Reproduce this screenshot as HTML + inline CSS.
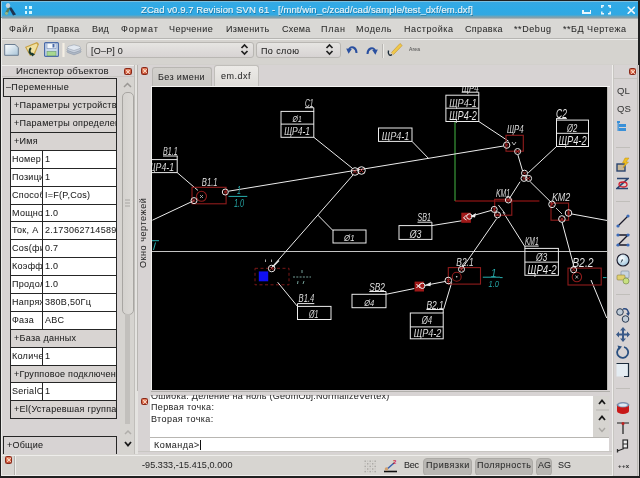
<!DOCTYPE html>
<html><head><meta charset="utf-8">
<style>
*{margin:0;padding:0;box-sizing:border-box}
html,body{width:640px;height:478px;overflow:hidden;-webkit-font-smoothing:antialiased;background:#d8d6d2;font-family:"Liberation Sans",sans-serif;font-size:10px;color:#202020;position:relative}
.a{position:absolute}
.t{position:absolute;white-space:pre;line-height:1;will-change:transform;-webkit-text-stroke:0.05px currentColor;font-family:"Liberation Sans",sans-serif}
</style></head><body>
<div class="a" style="left:0px;top:0px;width:640px;height:478px;background:#d8d6d2;"></div>
<div class="a" style="left:0;top:0;width:640px;height:19px;background:linear-gradient(#58a8cc 0,#58a8cc 2px,#35a9e4 2.5px,#2eaae6 9px,#32a8e2 15px,#5aa6c6 15.8px,#7aa2b2 17px,#8e9ea6 18.2px,#dcdbd8 19px)"></div>
<div class="a" style="left:0px;top:0px;width:640px;height:1px;background:#202020;"></div>
<div class="a" style="left:0px;top:0px;width:1px;height:478px;background:#202020;"></div>
<div class="a" style="left:638px;top:0px;width:2px;height:478px;background:#202020;"></div>
<div class="a" style="left:0px;top:476px;width:640px;height:2px;background:#202020;"></div>
<svg class="a" style="left:3px;top:2px" width="14" height="14" viewBox="0 0 14 14"><path d="M5.5 5.5 L8.5 5.5 L13 12.5 L10 13.5 Z" fill="#1e3450"/><path d="M5 5.5 L1.5 12 L4 13 L7 7 Z" fill="#5a7a5a"/><ellipse cx="3.5" cy="11.5" rx="1.6" ry="1.4" fill="#90b890"/><ellipse cx="5" cy="3.5" rx="2.2" ry="2.5" fill="#c4d4dc"/></svg>
<div class="a" style="left:1px;top:1px;width:1px;height:16px;background:#8ccbe8;"></div>
<div class="a" style="left:1px;top:1px;width:637px;height:1px;background:#7cc0e0;"></div>
<div class="a" style="left:24.6px;top:5.5px;width:2.8px;height:3.5px;background:#d4f6fc;"></div>
<div class="a" style="left:29.3px;top:5.5px;width:2.8px;height:3.5px;background:#d4f6fc;"></div>
<div class="a" style="left:24.6px;top:11px;width:2.8px;height:3px;background:#d4f6fc;"></div>
<div class="a" style="left:29.3px;top:11px;width:2.8px;height:3px;background:#d4f6fc;"></div>
<div class="t" style="left:141.00px;top:5.16px;font-size:9.5px;color:#e8f4f8;font-weight:normal;letter-spacing:0.078px;-webkit-text-stroke:0.15px #e8f4f8;text-shadow:0.6px 0.6px 0.4px rgba(0,50,80,0.45)">ZCad v0.9.7 Revision SVN 61 - [/mnt/win_c/zcad/cad/sample/test_dxf/em.dxf]</div>
<div class="a" style="left:582px;top:12.3px;width:9px;height:1.7px;background:#e8f6fc"></div>
<div class="a" style="left:582px;top:9.5px;width:1.5px;height:3px;background:#e8f6fc"></div><div class="a" style="left:589.5px;top:9.5px;width:1.5px;height:3px;background:#e8f6fc"></div>
<svg class="a" style="left:601px;top:5px" width="10" height="9.5" viewBox="0 0 10 9.5" fill="none" stroke="#e8f6fc" stroke-width="1.5"><path d="M0.8 3V0.8H3M7 0.8H9.2V3M9.2 6.5V8.7H7M3 8.7H0.8V6.5"/></svg>
<svg class="a" style="left:626.5px;top:5.5px" width="8.5" height="8.5" viewBox="0 0 8.5 8.5" stroke="#f0f8fc" stroke-width="1.6"><path d="M0.7 0.7L7.8 7.8M7.8 0.7L0.7 7.8"/></svg>
<div class="a" style="left:1px;top:19px;width:637px;height:19px;background:#d9d8d5;"></div>
<div class="a" style="left:1px;top:38px;width:637px;height:1px;background:#b6b5b2;"></div>
<div class="a" style="left:1px;top:39px;width:637px;height:1px;background:#ededeb;"></div>
<div class="t" style="left:9.40px;top:25.18px;font-size:9px;color:#2a2a2a;font-weight:normal;letter-spacing:0.753px;">Файл</div>
<div class="t" style="left:46.50px;top:25.18px;font-size:9px;color:#2a2a2a;font-weight:normal;letter-spacing:0.379px;">Правка</div>
<div class="t" style="left:92.00px;top:25.18px;font-size:9px;color:#2a2a2a;font-weight:normal;letter-spacing:0.252px;">Вид</div>
<div class="t" style="left:121.00px;top:25.18px;font-size:9px;color:#2a2a2a;font-weight:normal;letter-spacing:1.003px;">Формат</div>
<div class="t" style="left:169.00px;top:25.18px;font-size:9px;color:#2a2a2a;font-weight:normal;letter-spacing:0.455px;">Черчение</div>
<div class="t" style="left:225.50px;top:25.18px;font-size:9px;color:#2a2a2a;font-weight:normal;letter-spacing:0.356px;">Изменить</div>
<div class="t" style="left:281.70px;top:25.18px;font-size:9px;color:#2a2a2a;font-weight:normal;letter-spacing:0.298px;">Схема</div>
<div class="t" style="left:321.00px;top:25.18px;font-size:9px;color:#2a2a2a;font-weight:normal;letter-spacing:0.766px;">План</div>
<div class="t" style="left:356.00px;top:25.18px;font-size:9px;color:#2a2a2a;font-weight:normal;letter-spacing:0.637px;">Модель</div>
<div class="t" style="left:404.00px;top:25.18px;font-size:9px;color:#2a2a2a;font-weight:normal;letter-spacing:0.586px;">Настройка</div>
<div class="t" style="left:464.60px;top:25.18px;font-size:9px;color:#2a2a2a;font-weight:normal;letter-spacing:0.348px;">Справка</div>
<div class="t" style="left:514.00px;top:25.18px;font-size:9px;color:#2a2a2a;font-weight:normal;letter-spacing:0.578px;">**Debug</div>
<div class="t" style="left:562.60px;top:25.18px;font-size:9px;color:#2a2a2a;font-weight:normal;letter-spacing:0.520px;">**БД Чертежа</div>
<div class="a" style="left:1px;top:40px;width:637px;height:25px;background:#d5d3cf;"></div>
<div class="a" style="left:1px;top:64px;width:637px;height:1px;background:#d2d0cc;"></div>
<svg class="a" style="left:4px;top:43px" width="15" height="13" viewBox="0 0 15 13"><defs><linearGradient id="g1" x1="0" y1="0" x2="1" y2="1"><stop offset="0" stop-color="#ffffff"/><stop offset="1" stop-color="#a8c4d8"/></linearGradient></defs><path d="M0.7 1.5H11L14.3 4.5V12.3H0.7Z" fill="url(#g1)" stroke="#6a7c90" stroke-width="1"/></svg>
<svg class="a" style="left:23.5px;top:41px" width="16" height="16" viewBox="0 0 16 16"><path d="M1 6L13 1L15 3L11 13L6 15Z" fill="#c8a040"/><path d="M2.5 6.5L12.5 2.5L13.5 4L10 12L6 13.5Z" fill="#f0e0a0"/><path d="M7 7C4.5 9 5 13 9 13.5" stroke="#1a3a30" stroke-width="2.2" fill="none"/><path d="M8 11.5L11 13.5L8 15.5Z" fill="#1a3a30"/></svg>
<svg class="a" style="left:43.5px;top:41.5px" width="15" height="15" viewBox="0 0 15 15"><rect x="0.6" y="0.6" width="13.8" height="13.8" rx="1" fill="#c8d8ec" stroke="#4a6aa8" stroke-width="1.2"/><rect x="3" y="1.2" width="9" height="5.5" fill="#f4f8fc" stroke="#7a90b8" stroke-width="0.6"/><rect x="8.5" y="2" width="2" height="3.5" fill="#4a6aa8"/><rect x="3" y="9.5" width="9" height="4.3" fill="#a8d890" stroke="#6a9a70" stroke-width="0.6"/></svg>
<div class="a" style="left:61.5px;top:43px;width:3px;height:14px;background:linear-gradient(90deg,#e4dcd8,#f4f0e4,#e0dcd8);"></div>
<svg class="a" style="left:66px;top:43.5px" width="16" height="12" viewBox="0 0 16 12"><path d="M1 7.5Q1 6.5 3 6L8 4.5L13 6Q15 6.5 15 7.5Q15 8.5 13 9L8 10.8L3 9Q1 8.5 1 7.5Z" fill="#b0bac8" stroke="#8a94a4" stroke-width="0.6"/><path d="M1 5.5Q1 4.5 3 4L8 2.5L13 4Q15 4.5 15 5.5Q15 6.5 13 7L8 8.8L3 7Q1 6.5 1 5.5Z" fill="#c8d0dc" stroke="#8a94a4" stroke-width="0.6"/><path d="M1.5 3.5Q1.5 2.5 3.5 2L8 0.8L12.5 2Q14.5 2.5 14.5 3.5Q14.5 4.5 12.5 5L8 6.5L3.5 5Q1.5 4.5 1.5 3.5Z" fill="#e2e8f0" stroke="#98a2b0" stroke-width="0.6"/></svg>
<div class="a" style="left:85.5px;top:41.5px;width:168px;height:16px;border:1px solid #b9b7b3;border-radius:3px;background:linear-gradient(#e6e5e2,#d7d3d3)"></div>
<div class="t" style="left:90.80px;top:46.88px;font-size:9px;color:#222;font-weight:normal;letter-spacing:0.214px;">[O–P] 0</div>
<svg class="a" style="left:240px;top:43px" width="9" height="13" viewBox="0 0 9 13" fill="none" stroke="#202020" stroke-width="1.7"><path d="M1.5 5L4.5 2L7.5 5M1.5 8L4.5 11L7.5 8"/></svg>
<div class="a" style="left:255.5px;top:41.5px;width:85px;height:16px;border:1px solid #b9b7b3;border-radius:3px;background:linear-gradient(#e6e5e2,#d7d3d3)"></div>
<div class="t" style="left:261.00px;top:46.88px;font-size:9px;color:#222;font-weight:normal;letter-spacing:0.401px;">По слою</div>
<svg class="a" style="left:325px;top:43px" width="9" height="13" viewBox="0 0 9 13" fill="none" stroke="#202020" stroke-width="1.7"><path d="M1.5 5L4.5 2L7.5 5M1.5 8L4.5 11L7.5 8"/></svg>
<svg class="a" style="left:346px;top:44px" width="12" height="11" viewBox="0 0 12 11" fill="none"><path d="M10.5 9C10.5 3.5 5 1 3 5.5" stroke="#2a50a0" stroke-width="2"/><path d="M0.2 4.5L5.8 5L2.6 9.8Z" fill="#2a50a0"/></svg>
<svg class="a" style="left:366px;top:44.5px" width="12" height="11" viewBox="0 0 12 11" fill="none"><g transform="translate(12,0) scale(-1,1)"><path d="M10.5 9C10.5 3.5 5 1 3 5.5" stroke="#2a50a0" stroke-width="2"/><path d="M0.2 4.5L5.8 5L2.6 9.8Z" fill="#2a50a0"/></g></svg>
<div class="a" style="left:382px;top:44px;width:1px;height:14px;background:#b8b6b2;"></div>
<div class="a" style="left:383px;top:44px;width:1px;height:14px;background:#ecebe8;"></div>
<svg class="a" style="left:387px;top:42px" width="16" height="15" viewBox="0 0 16 15"><path d="M4.5 10.5L13 1.5L15.2 3.5L6.5 12.5Z" fill="#f0c848" stroke="#c09030" stroke-width="0.6"/><path d="M4.5 10.5L6.5 12.5L4 13Z" fill="#e8d0a0"/><path d="M1.5 8.5C0.5 13 3 14 5 12.5" stroke="#1a2a38" stroke-width="1.4" fill="none"/></svg>
<div class="t" style="left:409.00px;top:47.27px;font-size:5px;color:#555;font-weight:normal;letter-spacing:0.146px;">Area</div>
<div class="a" style="left:1px;top:65px;width:133px;height:389px;background:#d7d3d3;"></div>
<div class="a" style="left:1px;top:65px;width:133px;height:1px;background:#eeedeb;"></div>
<div class="t" style="left:15.50px;top:66.47px;font-size:9.6px;color:#2a2a2a;font-weight:normal;letter-spacing:0.128px;">Инспектор объектов</div>
<div class="a" style="left:124px;top:67.5px;width:7.5px;height:7.5px;border-radius:1.5px;background:radial-gradient(circle at 50% 40%,#f4b89a,#d86848 60%,#a03020);border:1px solid #8a2818"></div>
<svg class="a" style="left:124px;top:67.5px" width="8" height="8" viewBox="0 0 8 8" stroke="#fbe0d0" stroke-width="1" opacity="0.8"><path d="M2 2L6 6M6 2L2 6"/></svg>
<div class="a" style="left:1px;top:76px;width:133px;height:1px;background:#c8c6c2;"></div>
<div class="a" style="left:3px;top:78px;width:114px;height:342px;overflow:hidden">
<div class="a" style="left:0;top:0.0px;width:114px;height:19px;background:#d9d5d3;border:1px solid #262626"></div>
<div class="t" style="left:2.60px;top:4.68px;font-size:9px;color:#222;font-weight:normal;letter-spacing:0.359px;">–Переменные</div>
<div class="a" style="left:7px;top:18.0px;width:107px;height:19px;background:#d8d4d2;border:1px solid #262626"></div>
<div class="t" style="left:10.50px;top:22.68px;font-size:9px;color:#222;font-weight:normal;letter-spacing:0.280px;">+Параметры устройства</div>
<div class="a" style="left:7px;top:36.0px;width:107px;height:19px;background:#d8d4d2;border:1px solid #262626"></div>
<div class="t" style="left:10.50px;top:40.68px;font-size:9px;color:#222;font-weight:normal;letter-spacing:0.280px;">+Параметры определения</div>
<div class="a" style="left:7px;top:54.0px;width:107px;height:19px;background:#d8d4d2;border:1px solid #262626"></div>
<div class="t" style="left:10.50px;top:58.68px;font-size:9px;color:#222;font-weight:normal;letter-spacing:0.280px;">+Имя</div>
<div class="a" style="left:7px;top:72.0px;width:107px;height:19px;background:#fff;border:1px solid #262626"></div>
<div class="a" style="left:39px;top:72.0px;width:1px;height:19px;background:#262626"></div>
<div class="a" style="left:8.7px;top:73.0px;width:30.8px;height:17px;overflow:hidden">
<div class="t" style="left:0.60px;top:3.68px;font-size:9px;color:#222;font-weight:normal;letter-spacing:0.280px;">Номер</div>
</div>
<div class="t" style="left:42.30px;top:76.68px;font-size:9px;color:#222;font-weight:normal;letter-spacing:0.280px;">1</div>
<div class="a" style="left:7px;top:90.0px;width:107px;height:19px;background:#fff;border:1px solid #262626"></div>
<div class="a" style="left:39px;top:90.0px;width:1px;height:19px;background:#262626"></div>
<div class="a" style="left:8.7px;top:91.0px;width:30.8px;height:17px;overflow:hidden">
<div class="t" style="left:0.60px;top:3.68px;font-size:9px;color:#222;font-weight:normal;letter-spacing:0.280px;">Позиция</div>
</div>
<div class="t" style="left:42.30px;top:94.68px;font-size:9px;color:#222;font-weight:normal;letter-spacing:0.280px;">1</div>
<div class="a" style="left:7px;top:108.0px;width:107px;height:19px;background:#fff;border:1px solid #262626"></div>
<div class="a" style="left:39px;top:108.0px;width:1px;height:19px;background:#262626"></div>
<div class="a" style="left:8.7px;top:109.0px;width:30.8px;height:17px;overflow:hidden">
<div class="t" style="left:0.60px;top:3.68px;font-size:9px;color:#222;font-weight:normal;letter-spacing:0.280px;">Способ</div>
</div>
<div class="t" style="left:42.30px;top:112.68px;font-size:9px;color:#222;font-weight:normal;letter-spacing:0.280px;">I=F(P,Cos)</div>
<div class="a" style="left:7px;top:126.0px;width:107px;height:18px;background:#fff;border:1px solid #262626"></div>
<div class="a" style="left:39px;top:126.0px;width:1px;height:18px;background:#262626"></div>
<div class="a" style="left:8.7px;top:127.0px;width:30.8px;height:16px;overflow:hidden">
<div class="t" style="left:0.60px;top:3.68px;font-size:9px;color:#222;font-weight:normal;letter-spacing:0.280px;">Мощность</div>
</div>
<div class="t" style="left:42.30px;top:130.68px;font-size:9px;color:#222;font-weight:normal;letter-spacing:0.280px;">1.0</div>
<div class="a" style="left:7px;top:143.0px;width:107px;height:19px;background:#fff;border:1px solid #262626"></div>
<div class="a" style="left:39px;top:143.0px;width:1px;height:19px;background:#262626"></div>
<div class="a" style="left:8.7px;top:144.0px;width:30.8px;height:17px;overflow:hidden">
<div class="t" style="left:0.60px;top:3.68px;font-size:9px;color:#222;font-weight:normal;letter-spacing:0.280px;">Ток, А</div>
</div>
<div class="t" style="left:42.30px;top:147.68px;font-size:9px;color:#222;font-weight:normal;letter-spacing:0.280px;">2.17306271458951</div>
<div class="a" style="left:7px;top:161.0px;width:107px;height:19px;background:#fff;border:1px solid #262626"></div>
<div class="a" style="left:39px;top:161.0px;width:1px;height:19px;background:#262626"></div>
<div class="a" style="left:8.7px;top:162.0px;width:30.8px;height:17px;overflow:hidden">
<div class="t" style="left:0.60px;top:3.68px;font-size:9px;color:#222;font-weight:normal;letter-spacing:0.280px;">Cos(фи)</div>
</div>
<div class="t" style="left:42.30px;top:165.68px;font-size:9px;color:#222;font-weight:normal;letter-spacing:0.280px;">0.7</div>
<div class="a" style="left:7px;top:179.0px;width:107px;height:19px;background:#fff;border:1px solid #262626"></div>
<div class="a" style="left:39px;top:179.0px;width:1px;height:19px;background:#262626"></div>
<div class="a" style="left:8.7px;top:180.0px;width:30.8px;height:17px;overflow:hidden">
<div class="t" style="left:0.60px;top:3.68px;font-size:9px;color:#222;font-weight:normal;letter-spacing:0.280px;">Коэффициент</div>
</div>
<div class="t" style="left:42.30px;top:183.68px;font-size:9px;color:#222;font-weight:normal;letter-spacing:0.280px;">1.0</div>
<div class="a" style="left:7px;top:197.0px;width:107px;height:19px;background:#fff;border:1px solid #262626"></div>
<div class="a" style="left:39px;top:197.0px;width:1px;height:19px;background:#262626"></div>
<div class="a" style="left:8.7px;top:198.0px;width:30.8px;height:17px;overflow:hidden">
<div class="t" style="left:0.60px;top:3.68px;font-size:9px;color:#222;font-weight:normal;letter-spacing:0.280px;">Продолж</div>
</div>
<div class="t" style="left:42.30px;top:201.68px;font-size:9px;color:#222;font-weight:normal;letter-spacing:0.280px;">1.0</div>
<div class="a" style="left:7px;top:215.0px;width:107px;height:19px;background:#fff;border:1px solid #262626"></div>
<div class="a" style="left:39px;top:215.0px;width:1px;height:19px;background:#262626"></div>
<div class="a" style="left:8.7px;top:216.0px;width:30.8px;height:17px;overflow:hidden">
<div class="t" style="left:0.60px;top:3.68px;font-size:9px;color:#222;font-weight:normal;letter-spacing:0.280px;">Напряжение</div>
</div>
<div class="t" style="left:42.30px;top:219.68px;font-size:9px;color:#222;font-weight:normal;letter-spacing:0.280px;">380В,50Гц</div>
<div class="a" style="left:7px;top:233.0px;width:107px;height:19px;background:#fff;border:1px solid #262626"></div>
<div class="a" style="left:39px;top:233.0px;width:1px;height:19px;background:#262626"></div>
<div class="a" style="left:8.7px;top:234.0px;width:30.8px;height:17px;overflow:hidden">
<div class="t" style="left:0.60px;top:3.68px;font-size:9px;color:#222;font-weight:normal;letter-spacing:0.280px;">Фаза</div>
</div>
<div class="t" style="left:42.30px;top:237.68px;font-size:9px;color:#222;font-weight:normal;letter-spacing:0.280px;">ABC</div>
<div class="a" style="left:7px;top:251.0px;width:107px;height:19px;background:#d8d4d2;border:1px solid #262626"></div>
<div class="t" style="left:10.50px;top:255.68px;font-size:9px;color:#222;font-weight:normal;letter-spacing:0.280px;">+База данных</div>
<div class="a" style="left:7px;top:269.0px;width:107px;height:19px;background:#fff;border:1px solid #262626"></div>
<div class="a" style="left:39px;top:269.0px;width:1px;height:19px;background:#262626"></div>
<div class="a" style="left:8.7px;top:270.0px;width:30.8px;height:17px;overflow:hidden">
<div class="t" style="left:0.60px;top:3.68px;font-size:9px;color:#222;font-weight:normal;letter-spacing:0.280px;">Количество</div>
</div>
<div class="t" style="left:42.30px;top:273.68px;font-size:9px;color:#222;font-weight:normal;letter-spacing:0.280px;">1</div>
<div class="a" style="left:7px;top:287.0px;width:107px;height:18px;background:#d8d4d2;border:1px solid #262626"></div>
<div class="t" style="left:10.50px;top:291.68px;font-size:9px;color:#222;font-weight:normal;letter-spacing:0.280px;">+Групповое подключение</div>
<div class="a" style="left:7px;top:304.0px;width:107px;height:19px;background:#fff;border:1px solid #262626"></div>
<div class="a" style="left:39px;top:304.0px;width:1px;height:19px;background:#262626"></div>
<div class="a" style="left:8.7px;top:305.0px;width:30.8px;height:17px;overflow:hidden">
<div class="t" style="left:0.60px;top:3.68px;font-size:9px;color:#222;font-weight:normal;letter-spacing:0.280px;">SerialConnection</div>
</div>
<div class="t" style="left:42.30px;top:308.68px;font-size:9px;color:#222;font-weight:normal;letter-spacing:0.280px;">1</div>
<div class="a" style="left:7px;top:322.0px;width:107px;height:19px;background:#d8d4d2;border:1px solid #262626"></div>
<div class="t" style="left:10.50px;top:326.68px;font-size:9px;color:#222;font-weight:normal;letter-spacing:0.280px;">+El(Устаревшая группа)</div>
</div>
<div class="a" style="left:120px;top:78px;width:14px;height:376px;background:#d6d4d0;"></div>
<svg class="a" style="left:123px;top:82px" width="9" height="6" viewBox="0 0 9 6" fill="none" stroke="#9a9894" stroke-width="1.5"><path d="M1 5L4.5 1.5L8 5"/></svg>
<div class="a" style="left:122px;top:91.5px;width:12px;height:223px;border:1px solid #a8a6a2;border-radius:5px;background:linear-gradient(90deg,#d4d2ce,#dcdad6)"></div>
<div class="a" style="left:124.5px;top:314px;width:5px;height:110px;background:#c2c0bc;"></div>
<svg class="a" style="left:124px;top:199px" width="7" height="8" viewBox="0 0 7 8" stroke="#a8a6a2" stroke-width="1"><path d="M1 1H6M1 4H6M1 7H6"/></svg>
<svg class="a" style="left:123.5px;top:429px" width="8" height="6" viewBox="0 0 8 6" fill="none" stroke="#b0aeaa" stroke-width="1.5"><path d="M1 5L4 2L7 5"/></svg>
<svg class="a" style="left:123.5px;top:441px" width="8" height="6" viewBox="0 0 8 6" fill="none" stroke="#1a1a1a" stroke-width="1.8"><path d="M1 1L4 4.5L7 1"/></svg>
<div class="a" style="left:3px;top:436px;width:114px;height:19px;background:#d7d3d3;border:1px solid #262626;border-bottom:none"></div>
<div class="t" style="left:6.60px;top:441.08px;font-size:9px;color:#222;font-weight:normal;letter-spacing:0.228px;">+Общие</div>
<div class="a" style="left:133.5px;top:65px;width:1px;height:390px;background:#c0beba;"></div>
<div class="a" style="left:134.5px;top:65px;width:3px;height:390px;background:#e4e3e0;"></div>
<div class="a" style="left:137.3px;top:65px;width:1px;height:326px;background:#b8b6b2;"></div>
<div class="a" style="left:138px;top:65px;width:474px;height:326px;background:#d7d3d3;"></div>
<div class="a" style="left:140.8px;top:67px;width:7.5px;height:7.5px;border-radius:1.5px;background:radial-gradient(circle at 50% 40%,#f4b89a,#d86848 60%,#a03020);border:1px solid #8a2818"></div>
<svg class="a" style="left:140.8px;top:67px" width="8" height="8" viewBox="0 0 8 8" stroke="#fbe0d0" stroke-width="1" opacity="0.8"><path d="M2 2L6 6M6 2L2 6"/></svg>
<div class="a" style="left:152.3px;top:67px;width:60px;height:20px;background:linear-gradient(#d2d0cc,#c8c6c2);border:1px solid #b8b6b2;border-bottom:none;border-radius:3px 3px 0 0"></div>
<div class="t" style="left:158.40px;top:72.58px;font-size:9px;color:#2a2a2a;font-weight:normal;letter-spacing:0.380px;">Без имени</div>
<div class="a" style="left:214px;top:65px;width:44.5px;height:22px;background:linear-gradient(#eceae7,#dedcd8);border:1px solid #c0beba;border-bottom:none;border-radius:3px 3px 0 0"></div>
<div class="t" style="left:221.40px;top:71.58px;font-size:9px;color:#2a2a2a;font-weight:normal;letter-spacing:0.477px;">em.dxf</div>
<div class="a" style="left:150.5px;top:86px;width:459px;height:1px;background:#f4f3f1;"></div>
<div class="a" style="left:150.5px;top:86px;width:1.3px;height:305px;background:#f0efed;"></div>
<div class="a" style="left:607px;top:87px;width:1px;height:304px;background:#bcbab6;"></div>
<div class="t" style="left:139.4px;top:267.8px;transform:rotate(-90deg);transform-origin:0 0;font-size:9px;color:#2a2a2a;letter-spacing:0.57px">Окно чертежей</div>
<div class="a" style="left:152px;top:87px;width:455px;height:303px;background:#000;"></div>
<svg class="a" style="left:152px;top:87px;will-change:transform" width="455" height="303" viewBox="152 87 455 303"><path d="M152,251.5 L607,251.5" stroke="#c4c4c4" stroke-width="1.1" fill="none" /><path d="M455,121.5 L455,201" stroke="#3a9a3a" stroke-width="1.2" fill="none" /><path d="M455,201 L539.4,201" stroke="#b01818" stroke-width="1.2" fill="none" /><path d="M152.4,220.2 L194,200.6" stroke="#ececec" stroke-width="1" fill="none" /><path d="M177.2,172.6 L197.9,190.4" stroke="#ececec" stroke-width="1" fill="none" /><path d="M228.5,191.2 L503.5,146" stroke="#ececec" stroke-width="1" fill="none" /><path d="M313.8,137.3 L352,168" stroke="#ececec" stroke-width="1" fill="none" /><path d="M412,141.4 L428.6,158.5" stroke="#ececec" stroke-width="1" fill="none" /><path d="M353,175 L271.4,267.9" stroke="#ececec" stroke-width="1" fill="none" /><path d="M317.9,215.2 L333,230.6" stroke="#ececec" stroke-width="1" fill="none" /><path d="M277.7,282.3 L297.5,306.4" stroke="#ececec" stroke-width="1" fill="none" /><path d="M478.8,121.5 L508.6,141.2" stroke="#ececec" stroke-width="1" fill="none" /><path d="M517.8,154.6 L522.6,171" stroke="#ececec" stroke-width="1" fill="none" /><path d="M556.5,146.5 L528.2,172.9" stroke="#ececec" stroke-width="1" fill="none" /><path d="M520.1,181.7 L508.4,200.1" stroke="#ececec" stroke-width="1" fill="none" /><path d="M530.2,181.7 L551.9,203.1" stroke="#ececec" stroke-width="1" fill="none" /><path d="M503,212 L524.9,246.6" stroke="#ececec" stroke-width="1" fill="none" /><path d="M496.7,218.5 L461.5,269.3" stroke="#ececec" stroke-width="1" fill="none" /><path d="M431.9,225.6 L462.8,220.6" stroke="#ececec" stroke-width="1" fill="none" /><path d="M469.8,216.5 L491,210.5" stroke="#ececec" stroke-width="1" fill="none" /><path d="M562,222 L573.9,266.4" stroke="#ececec" stroke-width="1" fill="none" /><path d="M571.3,213.9 L607.2,220.5" stroke="#ececec" stroke-width="1" fill="none" /><path d="M591,280 L606.7,318" stroke="#ececec" stroke-width="1" fill="none" /><path d="M386,294.3 L414.4,288.5" stroke="#ececec" stroke-width="1" fill="none" /><path d="M424.4,285.5 L445,281.5" stroke="#ececec" stroke-width="1" fill="none" /><path d="M451.7,282.5 L443.7,309" stroke="#ececec" stroke-width="1" fill="none" /><path d="M470 216.5 L476 213 L475 217.5 Z" fill="#ececec"/><path d="M425 285.3 L431 282 L430.5 286.3 Z" fill="#ececec"/><text x="163" y="155" font-size="10.97" fill="#ececec" stroke="#000" stroke-width="0.08" font-style="italic" textLength="14.6" lengthAdjust="spacingAndGlyphs" font-family="Liberation Sans">B1.1</text><path d="M163,156 L177.6,156" stroke="#ececec" stroke-width="1" fill="none" /><path d="M177.2,156 L177.2,159.6" stroke="#ececec" stroke-width="1" fill="none" /><rect x="145" y="159.6" width="32.19999999999999" height="13.0" stroke="#ececec" stroke-width="1" fill="none" /><text x="147.5" y="170.5" font-size="10.97" fill="#ececec" stroke="#000" stroke-width="0.08" font-style="italic" textLength="26.5" lengthAdjust="spacingAndGlyphs" font-family="Liberation Sans">ЩР4-1</text><text x="305" y="107.4" font-size="10.15" fill="#ececec" stroke="#000" stroke-width="0.08" font-style="italic" textLength="8.5" lengthAdjust="spacingAndGlyphs" font-family="Liberation Sans">C1</text><path d="M305,107.7 L313.8,107.7" stroke="#ececec" stroke-width="1" fill="none" /><path d="M313.8,107.7 L313.8,111.4" stroke="#ececec" stroke-width="1" fill="none" /><rect x="281" y="111.4" width="32.80000000000001" height="25.900000000000006" stroke="#ececec" stroke-width="1" fill="none" /><path d="M281,124.1 L313.8,124.1" stroke="#ececec" stroke-width="1" fill="none" /><text x="292.6" y="122" font-size="8.23" fill="#ececec" stroke="#000" stroke-width="0.08" font-style="italic" textLength="9.2" lengthAdjust="spacingAndGlyphs" font-family="Liberation Sans">Ø1</text><text x="284.2" y="135.3" font-size="10.01" fill="#ececec" stroke="#000" stroke-width="0.08" font-style="italic" textLength="25.8" lengthAdjust="spacingAndGlyphs" font-family="Liberation Sans">ЩР4-1</text><rect x="378.5" y="128" width="33.5" height="13.400000000000006" stroke="#ececec" stroke-width="1" fill="none" /><text x="381.8" y="139.5" font-size="10.97" fill="#ececec" stroke="#000" stroke-width="0.08" font-style="italic" textLength="27.6" lengthAdjust="spacingAndGlyphs" font-family="Liberation Sans">ЩР4-1</text><text x="461.7" y="91.5" font-size="10.29" fill="#ececec" stroke="#000" stroke-width="0.08" font-style="italic" textLength="16.8" lengthAdjust="spacingAndGlyphs" font-family="Liberation Sans">ЩР4</text><path d="M461.7,92.2 L478.8,92.2" stroke="#ececec" stroke-width="1" fill="none" /><path d="M478.8,92.2 L478.8,95.2" stroke="#ececec" stroke-width="1" fill="none" /><rect x="445.9" y="95.2" width="32.900000000000034" height="26.299999999999997" stroke="#ececec" stroke-width="1" fill="none" /><path d="M445.9,108.2 L478.8,108.2" stroke="#ececec" stroke-width="1" fill="none" /><text x="449.2" y="106.5" font-size="10.97" fill="#ececec" stroke="#000" stroke-width="0.08" font-style="italic" textLength="27.6" lengthAdjust="spacingAndGlyphs" font-family="Liberation Sans">ЩР4-1</text><text x="449.2" y="119.8" font-size="12.07" fill="#ececec" stroke="#000" stroke-width="0.08" font-style="italic" textLength="27.6" lengthAdjust="spacingAndGlyphs" font-family="Liberation Sans">ЩР4-2</text><text x="556" y="118" font-size="12.35" fill="#ececec" stroke="#000" stroke-width="0.08" font-style="italic" textLength="10.9" lengthAdjust="spacingAndGlyphs" font-family="Liberation Sans">C2</text><path d="M556,118.6 L566.9,118.6" stroke="#ececec" stroke-width="1" fill="none" /><path d="M556.5,118.6 L556.5,120.1" stroke="#ececec" stroke-width="1" fill="none" /><rect x="556.5" y="120.1" width="32.0" height="26.400000000000006" stroke="#ececec" stroke-width="1" fill="none" /><path d="M556.5,133.3 L588.5,133.3" stroke="#ececec" stroke-width="1" fill="none" /><text x="566.9" y="132" font-size="10.97" fill="#ececec" stroke="#000" stroke-width="0.08" font-style="italic" textLength="10.3" lengthAdjust="spacingAndGlyphs" font-family="Liberation Sans">Ø2</text><text x="558.4" y="145" font-size="12.35" fill="#ececec" stroke="#000" stroke-width="0.08" font-style="italic" textLength="28.2" lengthAdjust="spacingAndGlyphs" font-family="Liberation Sans">ЩР4-2</text><rect x="333" y="230" width="33" height="13" stroke="#ececec" stroke-width="1" fill="none" /><text x="344" y="241" font-size="9.60" fill="#ececec" stroke="#000" stroke-width="0.08" font-style="italic" textLength="10.6" lengthAdjust="spacingAndGlyphs" font-family="Liberation Sans">Ø1</text><text x="417.5" y="221.4" font-size="10.84" fill="#ececec" stroke="#000" stroke-width="0.08" font-style="italic" textLength="13.3" lengthAdjust="spacingAndGlyphs" font-family="Liberation Sans">SB1</text><path d="M417.5,222.2 L431.9,222.2" stroke="#ececec" stroke-width="1" fill="none" /><path d="M431.9,222.2 L431.9,225.6" stroke="#ececec" stroke-width="1" fill="none" /><rect x="399" y="225.6" width="32.89999999999998" height="13.800000000000011" stroke="#ececec" stroke-width="1" fill="none" /><text x="409.7" y="237.5" font-size="11.66" fill="#ececec" stroke="#000" stroke-width="0.08" font-style="italic" textLength="11.7" lengthAdjust="spacingAndGlyphs" font-family="Liberation Sans">Ø3</text><text x="524.9" y="245" font-size="10.97" fill="#ececec" stroke="#000" stroke-width="0.08" font-style="italic" textLength="13.8" lengthAdjust="spacingAndGlyphs" font-family="Liberation Sans">KM1</text><path d="M524.9,246.1 L538.7,246.1" stroke="#ececec" stroke-width="1" fill="none" /><path d="M524.9,246.1 L524.9,248.4" stroke="#ececec" stroke-width="1" fill="none" /><rect x="524.9" y="248.4" width="33.5" height="26.900000000000006" stroke="#ececec" stroke-width="1" fill="none" /><path d="M524.9,262.1 L558.4,262.1" stroke="#ececec" stroke-width="1" fill="none" /><text x="536" y="261" font-size="10.56" fill="#ececec" stroke="#000" stroke-width="0.08" font-style="italic" textLength="11.3" lengthAdjust="spacingAndGlyphs" font-family="Liberation Sans">Ø3</text><text x="527.5" y="273.8" font-size="12.76" fill="#ececec" stroke="#000" stroke-width="0.08" font-style="italic" textLength="29.2" lengthAdjust="spacingAndGlyphs" font-family="Liberation Sans">ЩР4-2</text><text x="298.6" y="302.2" font-size="10.56" fill="#ececec" stroke="#000" stroke-width="0.08" font-style="italic" textLength="15.7" lengthAdjust="spacingAndGlyphs" font-family="Liberation Sans">B1.4</text><path d="M297.5,303.6 L314.3,303.6" stroke="#ececec" stroke-width="1" fill="none" /><path d="M297.5,303.6 L297.5,306.4" stroke="#ececec" stroke-width="1" fill="none" /><rect x="297.5" y="306.4" width="33.5" height="13.100000000000023" stroke="#ececec" stroke-width="1" fill="none" /><text x="309" y="318" font-size="10.97" fill="#ececec" stroke="#000" stroke-width="0.08" font-style="italic" textLength="9.5" lengthAdjust="spacingAndGlyphs" font-family="Liberation Sans">Ø1</text><text x="369.3" y="291" font-size="11.66" fill="#ececec" stroke="#000" stroke-width="0.08" font-style="italic" textLength="15.7" lengthAdjust="spacingAndGlyphs" font-family="Liberation Sans">SB2</text><path d="M369.3,291.5 L386,291.5" stroke="#ececec" stroke-width="1" fill="none" /><path d="M386,291.5 L386,294.3" stroke="#ececec" stroke-width="1" fill="none" /><rect x="352" y="294.3" width="34" height="13.399999999999977" stroke="#ececec" stroke-width="1" fill="none" /><text x="364.2" y="306" font-size="9.60" fill="#ececec" stroke="#000" stroke-width="0.08" font-style="italic" textLength="10.1" lengthAdjust="spacingAndGlyphs" font-family="Liberation Sans">Ø4</text><text x="426.4" y="309" font-size="11.66" fill="#ececec" stroke="#000" stroke-width="0.08" font-style="italic" textLength="17.3" lengthAdjust="spacingAndGlyphs" font-family="Liberation Sans">B2.1</text><path d="M426.4,309.5 L443.7,309.5" stroke="#ececec" stroke-width="1" fill="none" /><path d="M443.2,309.5 L443.2,313" stroke="#ececec" stroke-width="1" fill="none" /><rect x="410.3" y="313" width="32.89999999999998" height="25.80000000000001" stroke="#ececec" stroke-width="1" fill="none" /><path d="M410.3,326.9 L443.2,326.9" stroke="#ececec" stroke-width="1" fill="none" /><text x="421.8" y="324" font-size="10.29" fill="#ececec" stroke="#000" stroke-width="0.08" font-style="italic" textLength="10.4" lengthAdjust="spacingAndGlyphs" font-family="Liberation Sans">Ø4</text><text x="413.8" y="336.6" font-size="10.43" fill="#ececec" stroke="#000" stroke-width="0.08" font-style="italic" textLength="27.6" lengthAdjust="spacingAndGlyphs" font-family="Liberation Sans">ЩР4-2</text><text x="201.8" y="185.5" font-size="11.66" fill="#ececec" stroke="#000" stroke-width="0.08" font-style="italic" textLength="15.7" lengthAdjust="spacingAndGlyphs" font-family="Liberation Sans">B1.1</text><text x="506.9" y="132.8" font-size="10.70" fill="#ececec" stroke="#000" stroke-width="0.08" font-style="italic" textLength="16.7" lengthAdjust="spacingAndGlyphs" font-family="Liberation Sans">ЩР4</text><text x="495.9" y="196.8" font-size="10.70" fill="#ececec" stroke="#000" stroke-width="0.08" font-style="italic" textLength="14.1" lengthAdjust="spacingAndGlyphs" font-family="Liberation Sans">KM1</text><text x="551.9" y="201" font-size="10.97" fill="#ececec" stroke="#000" stroke-width="0.08" font-style="italic" textLength="18.4" lengthAdjust="spacingAndGlyphs" font-family="Liberation Sans">KM2</text><text x="456.3" y="266.4" font-size="11.52" fill="#ececec" stroke="#000" stroke-width="0.08" font-style="italic" textLength="17.3" lengthAdjust="spacingAndGlyphs" font-family="Liberation Sans">B2.1</text><text x="572.2" y="267.3" font-size="12.07" fill="#ececec" stroke="#000" stroke-width="0.08" font-style="italic" textLength="21.4" lengthAdjust="spacingAndGlyphs" font-family="Liberation Sans">B2.2</text><rect x="192" y="187.3" width="34.099999999999994" height="16.5" stroke="#901c1c" stroke-width="1.1" fill="none" /><circle cx="201.5" cy="196.3" r="5" stroke="#901c1c" stroke-width="1.1" fill="none"/><path d="M200 195L203 198M203 195L200 198" stroke="#bbb" stroke-width="0.8"/><rect x="506" y="135.3" width="17.299999999999955" height="15.899999999999977" stroke="#901c1c" stroke-width="1.1" fill="none" /><path d="M512 142L514 145L516 142" stroke="#ccc" stroke-width="0.9" fill="none"/><rect x="494.7" y="199.3" width="17.100000000000023" height="15.899999999999977" stroke="#901c1c" stroke-width="1.1" fill="none" /><path d="M498.4,205 L505,213.5" stroke="#ececec" stroke-width="0.9" fill="none" /><rect x="551" y="203.1" width="17.600000000000023" height="17.099999999999994" stroke="#901c1c" stroke-width="1.1" fill="none" /><path d="M556,208 L562,214" stroke="#ececec" stroke-width="0.8" fill="none" /><rect x="448.3" y="267.6" width="32.19999999999999" height="16.5" stroke="#901c1c" stroke-width="1.1" fill="none" /><circle cx="456.7" cy="276.7" r="4.5" stroke="#901c1c" stroke-width="1.1" fill="none"/><circle cx="456.7" cy="276.7" r="0.8" fill="#ddd"/><rect x="568" y="268.1" width="33.200000000000045" height="16.899999999999977" stroke="#901c1c" stroke-width="1.1" fill="none" /><circle cx="576.9" cy="277" r="4.7" stroke="#901c1c" stroke-width="1.1" fill="none"/><path d="M575.5 275.5L578 278.5M578 275.5L575.5 278.5" stroke="#ccc" stroke-width="0.8"/><rect x="461.3" y="212.7" width="9.599999999999966" height="10.100000000000023" stroke="none" stroke-width="0" fill="#a01818" /><circle cx="469.4" cy="216.5" r="2.7" stroke="#f0f0f0" stroke-width="1" fill="none"/><path d="M466.5 215L463.5 218L466.5 220" stroke="#f0f0f0" stroke-width="1" fill="none"/><rect x="414.6" y="281.6" width="9.399999999999977" height="9.899999999999977" stroke="none" stroke-width="0" fill="#a01818" /><circle cx="422.3" cy="285.8" r="2.7" stroke="#f0f0f0" stroke-width="1" fill="none"/><path d="M416.5 284L420 288M420 284L416.5 288" stroke="#f0f0f0" stroke-width="1" fill="none"/><rect x="255" y="268.3" width="34" height="16.5" stroke="#7a1818" stroke-width="1" fill="none" stroke-dasharray="3,2.5"/><rect x="258.8" y="271.4" width="9.399999999999977" height="9.900000000000034" stroke="none" stroke-width="0" fill="#1010f0" /><circle cx="194" cy="200.6" r="3" stroke="#ececec" stroke-width="1" fill="none"/><path d="M192.3 198.9L195.7 202.2M195.7 198.9L192.3 202.2" stroke="#b02828" stroke-width="0.9"/><circle cx="225.3" cy="192" r="3" stroke="#ececec" stroke-width="1" fill="none"/><path d="M223.7 190.3L227.0 193.7M227.0 190.3L223.7 193.7" stroke="#b02828" stroke-width="0.9"/><circle cx="355" cy="171.5" r="3.8" stroke="#ececec" stroke-width="1" fill="none"/><path d="M352.9 169.4L357.1 173.6M357.1 169.4L352.9 173.6" stroke="#b02828" stroke-width="0.9"/><circle cx="361.5" cy="170.5" r="3.8" stroke="#ececec" stroke-width="1" fill="none"/><path d="M359.4 168.4L363.6 172.6M363.6 168.4L359.4 172.6" stroke="#b02828" stroke-width="0.9"/><circle cx="506.7" cy="145.1" r="3.2" stroke="#ececec" stroke-width="1" fill="none"/><path d="M504.9 143.3L508.5 146.9M508.5 143.3L504.9 146.9" stroke="#b02828" stroke-width="0.9"/><circle cx="517.6" cy="151.5" r="3" stroke="#ececec" stroke-width="1" fill="none"/><path d="M516.0 149.8L519.2 153.2M519.2 149.8L516.0 153.2" stroke="#b02828" stroke-width="0.9"/><circle cx="524.5" cy="173.2" r="3" stroke="#ececec" stroke-width="1" fill="none"/><path d="M522.9 171.5L526.1 174.8M526.1 171.5L522.9 174.8" stroke="#b02828" stroke-width="0.9"/><circle cx="524" cy="178.4" r="3" stroke="#ececec" stroke-width="1" fill="none"/><path d="M522.4 176.8L525.6 180.1M525.6 176.8L522.4 180.1" stroke="#b02828" stroke-width="0.9"/><circle cx="528.6" cy="178.4" r="3" stroke="#ececec" stroke-width="1" fill="none"/><path d="M527.0 176.8L530.2 180.1M530.2 176.8L527.0 180.1" stroke="#b02828" stroke-width="0.9"/><circle cx="508.4" cy="200" r="3" stroke="#ececec" stroke-width="1" fill="none"/><path d="M506.8 198.3L510.0 201.7M510.0 198.3L506.8 201.7" stroke="#b02828" stroke-width="0.9"/><circle cx="494.2" cy="209.4" r="3" stroke="#ececec" stroke-width="1" fill="none"/><path d="M492.6 207.8L495.8 211.1M495.8 207.8L492.6 211.1" stroke="#b02828" stroke-width="0.9"/><circle cx="497.5" cy="214.9" r="3" stroke="#ececec" stroke-width="1" fill="none"/><path d="M495.9 213.2L499.1 216.6M499.1 213.2L495.9 216.6" stroke="#b02828" stroke-width="0.9"/><circle cx="552" cy="204.3" r="3.3" stroke="#ececec" stroke-width="1" fill="none"/><path d="M550.2 202.5L553.8 206.1M553.8 202.5L550.2 206.1" stroke="#b02828" stroke-width="0.9"/><circle cx="568.5" cy="213" r="3.3" stroke="#ececec" stroke-width="1" fill="none"/><path d="M566.7 211.2L570.3 214.8M570.3 211.2L566.7 214.8" stroke="#b02828" stroke-width="0.9"/><circle cx="561.9" cy="219" r="3.3" stroke="#ececec" stroke-width="1" fill="none"/><path d="M560.1 217.2L563.7 220.8M563.7 217.2L560.1 220.8" stroke="#b02828" stroke-width="0.9"/><circle cx="461.5" cy="269.3" r="3" stroke="#ececec" stroke-width="1" fill="none"/><path d="M459.9 267.7L463.1 270.9M463.1 267.7L459.9 270.9" stroke="#b02828" stroke-width="0.9"/><circle cx="448.3" cy="280.5" r="3.3" stroke="#ececec" stroke-width="1" fill="none"/><path d="M446.5 278.7L450.1 282.3M450.1 278.7L446.5 282.3" stroke="#b02828" stroke-width="0.9"/><circle cx="573.6" cy="269.8" r="3" stroke="#ececec" stroke-width="1" fill="none"/><path d="M572.0 268.2L575.2 271.4M575.2 268.2L572.0 271.4" stroke="#b02828" stroke-width="0.9"/><circle cx="271.7" cy="268.5" r="3.3" stroke="#ececec" stroke-width="1" fill="none"/><path d="M269.9 266.7L273.5 270.3M273.5 266.7L269.9 270.3" stroke="#b02828" stroke-width="0.9"/><path d="M273,266.5 L279,260.5" stroke="#ececec" stroke-width="1.3" fill="none" /><path d="M265.5 259.5V262M271.5 259.5V262" stroke="#bbb" stroke-width="0.9"/><text x="237" y="193.5" font-size="10.29" fill="#28b0b0" stroke="#000" stroke-width="0.08" font-style="italic" textLength="4.0" lengthAdjust="spacingAndGlyphs" font-family="Liberation Sans">1</text><path d="M228.5,196.4 L247.3,196.4" stroke="#28b0b0" stroke-width="1" fill="none" /><text x="234" y="206.9" font-size="10.84" fill="#28b0b0" stroke="#000" stroke-width="0.08" font-style="italic" textLength="10.2" lengthAdjust="spacingAndGlyphs" font-family="Liberation Sans">1.0</text><text x="490.8" y="276.8" font-size="11.39" fill="#28b0b0" stroke="#000" stroke-width="0.08" font-style="italic" textLength="5.8" lengthAdjust="spacingAndGlyphs" font-family="Liberation Sans">1</text><path d="M482.8,277.2 L500,277.2" stroke="#28b0b0" stroke-width="1" fill="none" /><text x="488.5" y="287" font-size="9.88" fill="#28b0b0" stroke="#000" stroke-width="0.08" font-style="italic" textLength="10.4" lengthAdjust="spacingAndGlyphs" font-family="Liberation Sans">1.0</text><path d="M152,240.7 L159,240.7" stroke="#28b0b0" stroke-width="1" fill="none" /><path d="M155.5 242.5 L153.5 250" stroke="#28b0b0" stroke-width="1"/><path d="M500,277.6 L502.6,277.6" stroke="#28b0b0" stroke-width="1" fill="none" /><path d="M603,277.6 L606.5,277.6" stroke="#28b0b0" stroke-width="1" fill="none" /><g stroke="#80b0a8" stroke-width="0.9" fill="none"><path d="M302 270V273" /><path d="M293 277H311" stroke-dasharray="2,1.3"/><path d="M298 281L297.5 284M304 281L303 284"/></g></svg>
<div class="a" style="left:138px;top:390px;width:474px;height:64px;background:#d7d3d3;"></div>
<div class="a" style="left:150.5px;top:390.5px;width:459px;height:1px;background:#b0aeaa;"></div>
<div class="a" style="left:140.8px;top:397.5px;width:7.5px;height:7.5px;border-radius:1.5px;background:radial-gradient(circle at 50% 40%,#f4b89a,#d86848 60%,#a03020);border:1px solid #8a2818"></div>
<svg class="a" style="left:140.8px;top:397.5px" width="8" height="8" viewBox="0 0 8 8" stroke="#fbe0d0" stroke-width="1" opacity="0.8"><path d="M2 2L6 6M6 2L2 6"/></svg>
<div class="a" style="left:150px;top:395.5px;width:443px;height:41.5px;background:#fff;"></div>
<div class="a" style="left:150px;top:395px;width:443px;height:10px;overflow:hidden">
<div class="t" style="left:0.80px;top:-2.82px;font-size:9px;color:#2a2a2a;font-weight:normal;letter-spacing:0.280px;">Ошибка: Деление на ноль (GeomObj.NormalizeVertex)</div>
</div>
<div class="t" style="left:150.80px;top:403.38px;font-size:9px;color:#2a2a2a;font-weight:normal;letter-spacing:0.350px;">Первая точка:</div>
<div class="t" style="left:150.80px;top:414.98px;font-size:9px;color:#2a2a2a;font-weight:normal;letter-spacing:0.418px;">Вторая точка:</div>
<div class="a" style="left:593px;top:395.5px;width:16px;height:41.5px;background:#d6d4d0;"></div>
<svg class="a" style="left:598px;top:399px" width="8" height="6" viewBox="0 0 8 6" fill="none" stroke="#1a1a1a" stroke-width="1.8"><path d="M1 5L4 1.5L7 5"/></svg>
<div class="a" style="left:596px;top:408.5px;width:13px;height:2px;background:#c6c4c0;"></div>
<svg class="a" style="left:598px;top:414.5px" width="8" height="6" viewBox="0 0 8 6" fill="none" stroke="#1a1a1a" stroke-width="1.8"><path d="M1 5L4 1.5L7 5"/></svg>
<svg class="a" style="left:598px;top:427px" width="8" height="6" viewBox="0 0 8 6" fill="none" stroke="#a8a6a2" stroke-width="1.4"><path d="M1 1L4 4.5L7 1"/></svg>
<div class="a" style="left:150px;top:437px;width:459px;height:1px;background:#b8b6b2;"></div>
<div class="a" style="left:150px;top:438px;width:459px;height:13px;background:#fff;"></div>
<div class="t" style="left:154.00px;top:440.58px;font-size:9px;color:#2a2a2a;font-weight:normal;letter-spacing:0.466px;">Команда></div>
<div class="a" style="left:200px;top:439.5px;width:1px;height:10px;background:#111;"></div>
<div class="a" style="left:137.5px;top:451px;width:474px;height:1px;background:#c8c6c2;"></div>
<div class="a" style="left:1px;top:454px;width:611px;height:22px;background:#d7d5d1;"></div>
<div class="a" style="left:1px;top:454.5px;width:611px;height:1px;background:#eeedeb;"></div>
<div class="a" style="left:4.8px;top:456px;width:7.5px;height:7.5px;border-radius:1.5px;background:radial-gradient(circle at 50% 40%,#f4b89a,#d86848 60%,#a03020);border:1px solid #8a2818"></div>
<svg class="a" style="left:4.8px;top:456px" width="8" height="8" viewBox="0 0 8 8" stroke="#fbe0d0" stroke-width="1" opacity="0.8"><path d="M2 2L6 6M6 2L2 6"/></svg>
<div class="a" style="left:13.8px;top:456px;width:1px;height:19px;background:#b4b2ae;"></div>
<div class="a" style="left:14.8px;top:456px;width:1px;height:19px;background:#efeeec;"></div>
<div class="t" style="left:141.60px;top:460.98px;font-size:9px;color:#2a2a2a;font-weight:normal;letter-spacing:0.091px;">-95.333,-15.415,0.000</div>
<svg class="a" style="left:364px;top:460px" width="13" height="14" viewBox="0 0 13 14" fill="#a8a6a2"><rect x="0.5" y="0.5" width="1.4" height="1.4"/><rect x="0.5" y="5.7" width="1.4" height="1.4"/><rect x="0.5" y="10.9" width="1.4" height="1.4"/><rect x="3.0" y="3.1" width="1.4" height="1.4"/><rect x="3.0" y="8.3" width="1.4" height="1.4"/><rect x="5.5" y="0.5" width="1.4" height="1.4"/><rect x="5.5" y="5.7" width="1.4" height="1.4"/><rect x="5.5" y="10.9" width="1.4" height="1.4"/><rect x="8.0" y="3.1" width="1.4" height="1.4"/><rect x="8.0" y="8.3" width="1.4" height="1.4"/><rect x="10.5" y="0.5" width="1.4" height="1.4"/><rect x="10.5" y="5.7" width="1.4" height="1.4"/><rect x="10.5" y="10.9" width="1.4" height="1.4"/><rect x="0.5" y="3.1" width="1.2" height="1.2" fill="#c4c2be"/><rect x="0.5" y="8.3" width="1.2" height="1.2" fill="#c4c2be"/><rect x="3.0" y="0.5" width="1.2" height="1.2" fill="#c4c2be"/><rect x="3.0" y="5.7" width="1.2" height="1.2" fill="#c4c2be"/><rect x="3.0" y="10.9" width="1.2" height="1.2" fill="#c4c2be"/><rect x="5.5" y="3.1" width="1.2" height="1.2" fill="#c4c2be"/><rect x="5.5" y="8.3" width="1.2" height="1.2" fill="#c4c2be"/><rect x="8.0" y="0.5" width="1.2" height="1.2" fill="#c4c2be"/><rect x="8.0" y="5.7" width="1.2" height="1.2" fill="#c4c2be"/><rect x="8.0" y="10.9" width="1.2" height="1.2" fill="#c4c2be"/><rect x="10.5" y="3.1" width="1.2" height="1.2" fill="#c4c2be"/><rect x="10.5" y="8.3" width="1.2" height="1.2" fill="#c4c2be"/></svg>
<svg class="a" style="left:383px;top:459px" width="15" height="14" viewBox="0 0 15 14"><path d="M1 12.5H14" stroke="#111" stroke-width="1.6"/><path d="M3 11L11 4" stroke="#3860b0" stroke-width="1.5"/><circle cx="3.5" cy="10" r="1.8" fill="#d0a070"/><text x="10" y="5" font-size="6" fill="#d02040" font-family="Liberation Sans" font-weight="bold">2</text></svg>
<div class="t" style="left:404.00px;top:461.18px;font-size:9px;color:#2a2a2a;font-weight:normal;letter-spacing:-0.258px;">Вес</div>
<div class="a" style="left:423px;top:457.5px;width:48.6px;height:18.5px;border-radius:4px;background:#b9b7b3;border:1px solid #acaaa6"></div>
<div class="t" style="left:425.70px;top:461.18px;font-size:9px;color:#2a2a2a;font-weight:normal;letter-spacing:0.592px;">Привязки</div>
<div class="a" style="left:474.7px;top:457.5px;width:58.1px;height:18.5px;border-radius:4px;background:#b9b7b3;border:1px solid #acaaa6"></div>
<div class="t" style="left:477.00px;top:461.18px;font-size:9px;color:#2a2a2a;font-weight:normal;letter-spacing:0.477px;">Полярность</div>
<div class="a" style="left:535.7px;top:457.5px;width:16px;height:18.5px;border-radius:4px;background:#b9b7b3;border:1px solid #acaaa6"></div>
<div class="t" style="left:537.50px;top:461.18px;font-size:9px;color:#2a2a2a;font-weight:normal;letter-spacing:0.000px;">AG</div>
<div class="t" style="left:558.00px;top:461.18px;font-size:9px;color:#2a2a2a;font-weight:normal;letter-spacing:0.000px;">SG</div>
<div class="a" style="left:1px;top:18px;width:1px;height:458px;background:#ececea;"></div>
<div class="a" style="left:1px;top:474.5px;width:611px;height:1px;background:#eeedeb;"></div>
<div class="a" style="left:611.5px;top:65px;width:27px;height:411px;background:#d7d3d3;"></div>
<div class="a" style="left:611.5px;top:65px;width:1px;height:411px;background:#efeeec;"></div>
<div class="a" style="left:612.5px;top:65px;width:1px;height:411px;background:#c8c6c2;"></div>
<div class="a" style="left:628.5px;top:67.5px;width:7.5px;height:7.5px;border-radius:1.5px;background:radial-gradient(circle at 50% 40%,#f4b89a,#d86848 60%,#a03020);border:1px solid #8a2818"></div>
<svg class="a" style="left:628.5px;top:67.5px" width="8" height="8" viewBox="0 0 8 8" stroke="#fbe0d0" stroke-width="1" opacity="0.8"><path d="M2 2L6 6M6 2L2 6"/></svg>
<div class="a" style="left:612.5px;top:77.5px;width:25px;height:1px;background:#c6c4c0;"></div>
<div class="a" style="left:637px;top:65px;width:1px;height:411px;background:#bcbab6;"></div>
<div class="t" style="left:617.00px;top:86.36px;font-size:9.5px;color:#3a3a3a;font-weight:normal;letter-spacing:0.000px;">QL</div>
<div class="t" style="left:617.00px;top:104.46px;font-size:9.5px;color:#3a3a3a;font-weight:normal;letter-spacing:0.000px;">QS</div>
<div class="a" style="left:616px;top:146.6px;width:14px;height:1px;background:#c0beba;"></div>
<div class="a" style="left:616px;top:201px;width:14px;height:1px;background:#c0beba;"></div>
<div class="a" style="left:616px;top:294.3px;width:14px;height:1px;background:#c0beba;"></div>
<div class="a" style="left:616px;top:388px;width:14px;height:1px;background:#c0beba;"></div>

<svg class="a" style="left:616px;top:121px" width="11" height="11" viewBox="0 0 11 11" fill="#3a90d8"><rect x="1" y="0" width="3" height="2"/><rect x="1.5" y="2" width="1.3" height="8"/><rect x="3" y="3" width="7" height="3"/><rect x="3" y="7" width="7" height="3"/></svg>
<svg class="a" style="left:616px;top:157px" width="14" height="16" viewBox="0 0 14 16"><rect x="1" y="7" width="8" height="7" fill="#c8b898" stroke="#2a4470" stroke-width="1.4"/><path d="M9 1L13 1L10 5L12.5 5L7 11L9 6L6.5 6Z" fill="#f0c020" stroke="#c09010" stroke-width="0.5"/></svg>
<svg class="a" style="left:616px;top:177px" width="13" height="13" viewBox="0 0 13 13"><path d="M1 1.5H12L1 11.5H12" fill="none" stroke="#2a4470" stroke-width="1.6"/><ellipse cx="7" cy="7.5" rx="4" ry="2.5" fill="none" stroke="#d02030" stroke-width="1.3"/></svg>
<svg class="a" style="left:616px;top:214px" width="14" height="14" viewBox="0 0 14 14"><path d="M2 12L12 2" stroke="#1a1a2a" stroke-width="1.3"/><circle cx="2" cy="12" r="1.6" fill="#3a6ab8"/><circle cx="12" cy="2" r="1.6" fill="#3a6ab8"/></svg>
<svg class="a" style="left:616px;top:233px" width="14" height="14" viewBox="0 0 14 14"><path d="M2 2H12L2 12H12" fill="none" stroke="#1a1a2a" stroke-width="1.4"/><circle cx="2" cy="2" r="1.6" fill="#3a6ab8"/><circle cx="12" cy="2" r="1.6" fill="#3a6ab8"/><circle cx="2" cy="12" r="1.6" fill="#3a6ab8"/><circle cx="12" cy="12" r="1.6" fill="#3a6ab8"/></svg>
<svg class="a" style="left:616px;top:253px" width="14" height="14" viewBox="0 0 14 14"><defs><radialGradient id="cg" cx="0.4" cy="0.35" r="0.7"><stop offset="0" stop-color="#ffffff"/><stop offset="1" stop-color="#9cc4dc"/></radialGradient></defs><circle cx="7" cy="7" r="6" fill="url(#cg)" stroke="#1a1a2a" stroke-width="1.1"/><path d="M7 7L4.5 10.5L6 6Z" fill="#1a2a3a"/></svg>
<svg class="a" style="left:616px;top:270px" width="15" height="15" viewBox="0 0 15 15"><rect x="5" y="1" width="8" height="7" rx="1" fill="#c8d4e0" stroke="#7a8898" stroke-width="0.6"/><rect x="1" y="5" width="8" height="5" rx="1" fill="#e0d070" stroke="#8a8040" stroke-width="0.6"/><circle cx="10" cy="11" r="3" fill="#c8e080" stroke="#6a8040" stroke-width="0.6"/></svg>
<svg class="a" style="left:616px;top:307px" width="15" height="16" viewBox="0 0 15 16"><circle cx="4" cy="5" r="3.3" fill="#c0ccd8" stroke="#2a3a50" stroke-width="1"/><circle cx="9.5" cy="12" r="3.3" fill="#c0ccd8" stroke="#2a3a50" stroke-width="1"/><path d="M7 2C11 1 13 4 12 7" fill="none" stroke="#2a4a80" stroke-width="1.4"/><path d="M10 6.5L12.5 9L14 5.5Z" fill="#2a4a80"/></svg>
<svg class="a" style="left:616px;top:327px" width="14" height="15" viewBox="0 0 14 15" fill="#3a5a88"><path d="M7 0L10 3.5H8V6.5H11V4.5L14 7.5L11 10.5V8.5H8V11.5H10L7 15L4 11.5H6V8.5H3V10.5L0 7.5L3 4.5V6.5H6V3.5H4Z"/></svg>
<svg class="a" style="left:616px;top:345px" width="14" height="14" viewBox="0 0 14 14"><path d="M4 2.5A5.5 5.5 0 1 0 8 2" fill="none" stroke="#2a5080" stroke-width="1.8"/><path d="M1.5 0.5L6 1.5L3 5Z" fill="#2a5080"/></svg>
<svg class="a" style="left:616px;top:363px" width="14" height="15" viewBox="0 0 14 15"><rect x="0.5" y="0.5" width="12" height="13" fill="#e4ecf2"/><path d="M0.5 0.5H12.5V13.5H8" fill="none" stroke="#1a2a3a" stroke-width="1.2"/></svg>
<svg class="a" style="left:616px;top:401px" width="14" height="15" viewBox="0 0 14 15"><ellipse cx="7" cy="4" rx="6" ry="2.5" fill="#8aa8c8" stroke="#5a6a8a" stroke-width="0.6"/><path d="M1 4V10A6 3 0 0 0 13 10V4A6 2.5 0 0 1 1 4Z" fill="#c81818"/><ellipse cx="7" cy="4" rx="4" ry="1.5" fill="#e0e8f0"/></svg>
<svg class="a" style="left:616px;top:421px" width="14" height="14" viewBox="0 0 14 14"><path d="M1 2H13" stroke="#3a3a3a" stroke-width="1.2"/><path d="M7 2V13" stroke="#2a2a2a" stroke-width="1.3"/><circle cx="7" cy="2.5" r="1.5" fill="#c02020"/></svg>
<svg class="a" style="left:616px;top:439px" width="13" height="14" viewBox="0 0 13 14"><rect x="7" y="1" width="4.5" height="8" fill="#f0f0f0" stroke="#2a2a2a" stroke-width="1.2"/><path d="M7 5H11.5" stroke="#2a2a2a"/><path d="M8 9.5L1.5 12M1.5 10V13.5" fill="none" stroke="#2a2a2a" stroke-width="1.3"/></svg>

<div class="t" style="left:617.80px;top:462.92px;font-size:6px;color:#333;font-weight:bold;letter-spacing:0.420px;">++x</div>
</body></html>
